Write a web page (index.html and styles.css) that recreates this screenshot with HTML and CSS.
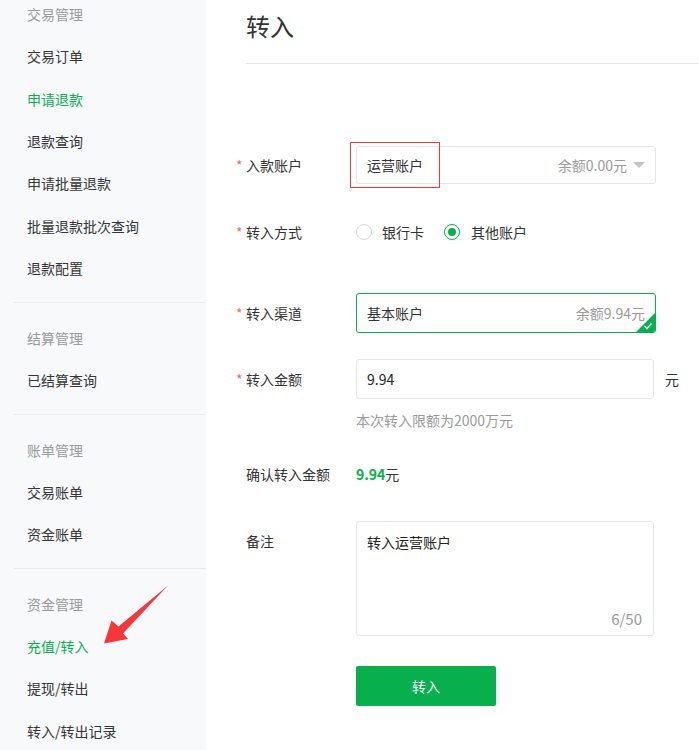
FILE: index.html
```html
<!DOCTYPE html>
<html lang="zh-CN">
<head>
<meta charset="utf-8">
<title>转入</title>
<link rel="stylesheet" href="styles.css">
</head>
<body>
<div class="page">
  <aside class="sidebar">
    <div class="group group-first">
      <div class="group-title">交易管理</div>
      <div class="item">交易订单</div>
      <div class="item active">申请退款</div>
      <div class="item">退款查询</div>
      <div class="item">申请批量退款</div>
      <div class="item">批量退款批次查询</div>
      <div class="item">退款配置</div>
    </div>
    <div class="group">
      <div class="group-title">结算管理</div>
      <div class="item">已结算查询</div>
    </div>
    <div class="group">
      <div class="group-title">账单管理</div>
      <div class="item">交易账单</div>
      <div class="item">资金账单</div>
    </div>
    <div class="group">
      <div class="group-title">资金管理</div>
      <div class="item active">充值/转入</div>
      <div class="item">提现/转出</div>
      <div class="item">转入/转出记录</div>
    </div>
    <svg class="arrow" width="80" height="70" viewBox="100 580 80 70" aria-hidden="true">
      <path d="M168,585.5 L118.5,626.5 L111.5,620.5 L104,643.5 L128,639 L123,633.5 Z" fill="#f7363a"/>
    </svg>
  </aside>

  <main class="main">
    <div class="header">
      <h1 class="title">转入</h1>
    </div>

    <div class="form">
      <div class="row row-1">
        <div class="label h38"><span class="star">*</span>入款账户</div>
        <div class="select">
          <span class="select-value">运营账户</span>
          <span class="select-extra">余额0.00元<span class="caret"></span></span>
          <span class="highlight"></span>
        </div>
      </div>

      <div class="row row-2">
        <div class="label h20"><span class="star">*</span>转入方式</div>
        <div class="radios">
          <span class="radio"><span class="radio-circle"></span><span class="radio-text">银行卡</span></span>
          <span class="radio checked"><span class="radio-circle"><span class="radio-dot"></span></span><span class="radio-text">其他账户</span></span>
        </div>
      </div>

      <div class="row row-3">
        <div class="label h40"><span class="star">*</span>转入渠道</div>
        <div class="select selected">
          <span class="select-value">基本账户</span>
          <span class="select-extra">余额9.94元</span>
          <svg class="corner-check" width="19" height="19" viewBox="0 0 19 19" aria-hidden="true">
            <path d="M19,0 L19,19 L0,19 Z" fill="#07b04c"/>
            <path d="M8.5,13 L11,15.5 L15.5,10.5" fill="none" stroke="#fff" stroke-width="1.4"/>
          </svg>
        </div>
      </div>

      <div class="row row-4">
        <div class="label h40"><span class="star">*</span>转入金额</div>
        <div class="control-col">
          <div class="input-line">
            <div class="input">9.94</div>
            <span class="unit">元</span>
          </div>
          <div class="hint">本次转入限额为2000万元</div>
        </div>
      </div>

      <div class="row row-5">
        <div class="label h20"><span class="star blank"></span>确认转入金额</div>
        <div class="confirm"><span class="amount">9.94</span>元</div>
      </div>

      <div class="row row-6">
        <div class="label label-top"><span class="star blank"></span>备注</div>
        <div class="textarea">
          <span class="textarea-text">转入运营账户</span>
          <span class="counter">6/50</span>
        </div>
      </div>

      <div class="row row-7">
        <div class="label"></div>
        <button class="btn" type="button">转入</button>
      </div>
    </div>
  </main>
</div>
</body>
</html>
```

FILE: styles.css
```css
* {
  box-sizing: border-box;
}

html, body {
  margin: 0;
  padding: 0;
  background: #ffffff;
}

body {
  font-family: "Noto Sans CJK SC", "Noto Sans", sans-serif;
  font-size: 14px;
  color: #333333;
  width: 699px;
  height: 750px;
  overflow: hidden;
}

.page {
  display: flex;
  width: 699px;
  height: 750px;
  overflow: hidden;
}

/* Sidebar */
.sidebar {
  position: relative;
  width: 206px;
  flex: none;
  height: 750px;
  background: #f8f9fb;
  padding-left: 14px;
}

.group {
  border-top: 1px solid #e9ebef;
  padding-top: 14px;
  padding-bottom: 12.3px;
}

.group-first {
  border-top: none;
  padding-top: 0;
  margin-top: -7px;
}

.group-title,
.item {
  height: 42.33px;
  line-height: 42.33px;
  padding-left: 13px;
  white-space: nowrap;
}

.group-title {
  color: #9a9a9a;
}

.item {
  color: #353535;
}

.item.active {
  color: #07b04c;
}

.arrow {
  position: absolute;
  left: 100px;
  top: 580px;
}

/* Main */
.main {
  flex: 1;
  padding-left: 30px;
}

.header {
  margin-left: 10px;
  padding-top: 10px;
  padding-bottom: 21px;
  border-bottom: 1px solid #e6e6e6;
}

.title {
  margin: 0;
  font-size: 24px;
  line-height: 32px;
  font-weight: normal;
  color: #333333;
}

.form {
  margin-top: 82px;
}

.row {
  display: flex;
  align-items: flex-start;
}

.row-2 { margin-top: 38px; }
.row-3 { margin-top: 51px; }
.row-4 { margin-top: 26px; }
.row-5 { margin-top: 34px; }
.row-6 { margin-top: 37px; }
.row-7 { margin-top: 30px; }

.label {
  width: 120px;
  flex: none;
  display: flex;
  align-items: center;
  color: #333333;
  white-space: nowrap;
}

.h38 { height: 38px; }
.h40 { height: 40px; }
.h20 { height: 20px; }

.label-top {
  padding-top: 10px;
  line-height: 20px;
}

.star {
  width: 10px;
  flex: none;
  color: #f0686a;
  font-size: 14px;
}

/* Select */
.select {
  position: relative;
  width: 300px;
  height: 38px;
  border: 1px solid #e6e6e6;
  border-radius: 3px;
  display: flex;
  align-items: center;
  justify-content: space-between;
  padding: 0 10px 0 10px;
  background: #ffffff;
}

.select.selected {
  height: 40px;
  border-color: #07b04c;
  overflow: hidden;
}

.select-value {
  color: #333333;
}

.select-extra {
  color: #9a9a9a;
  display: flex;
  align-items: center;
}

.caret {
  display: inline-block;
  width: 0;
  height: 0;
  margin-left: 6px;
  border-left: 6px solid transparent;
  border-right: 6px solid transparent;
  border-top: 6px solid #c4c4c4;
}

.highlight {
  position: absolute;
  left: -7px;
  top: -5px;
  width: 90px;
  height: 46px;
  border: 1px solid #f2363a;
  pointer-events: none;
}

.corner-check {
  position: absolute;
  right: 0;
  bottom: 0;
}

/* Radios */
.radios {
  display: flex;
  align-items: center;
  height: 20px;
}

.radio {
  display: flex;
  align-items: center;
  margin-right: 20px;
}

.radio-circle {
  width: 16px;
  height: 16px;
  border-radius: 50%;
  border: 1px solid #d3d7df;
  display: flex;
  align-items: center;
  justify-content: center;
  background: #ffffff;
}

.radio.checked .radio-circle {
  border: 1.5px solid #07b04c;
}

.radio-dot {
  width: 8px;
  height: 8px;
  border-radius: 50%;
  background: #07b04c;
}

.radio-text {
  margin-left: 10px;
  color: #333333;
}

.radio.checked .radio-text {
  margin-left: 11px;
}

/* Input */
.control-col {
  display: flex;
  flex-direction: column;
}

.input-line {
  display: flex;
  align-items: center;
}

.input {
  width: 298px;
  height: 40px;
  border: 1px solid #e6e6e6;
  border-radius: 3px;
  padding-left: 10px;
  line-height: 38px;
  color: #222222;
}

.unit {
  margin-left: 11px;
  color: #333333;
}

.hint {
  margin-top: 11px;
  line-height: 20px;
  color: #9a9a9a;
}

.confirm {
  line-height: 20px;
  color: #333333;
}

.amount {
  color: #07b04c;
  font-weight: bold;
}

/* Textarea */
.textarea {
  position: relative;
  width: 298px;
  height: 115px;
  border: 1px solid #e6e6e6;
  border-radius: 3px;
  padding: 10px 10px 0 10px;
  line-height: 20px;
}

.textarea-text {
  color: #222222;
}

.counter {
  position: absolute;
  right: 11px;
  bottom: 6px;
  font-size: 15px;
  line-height: 20px;
  color: #9a9a9a;
}

/* Button */
.btn {
  width: 140px;
  height: 40px;
  border: none;
  border-radius: 2px;
  background: #07b04c;
  color: #ffffff;
  font-family: inherit;
  font-size: 14px;
  padding: 0;
  cursor: pointer;
}
```
